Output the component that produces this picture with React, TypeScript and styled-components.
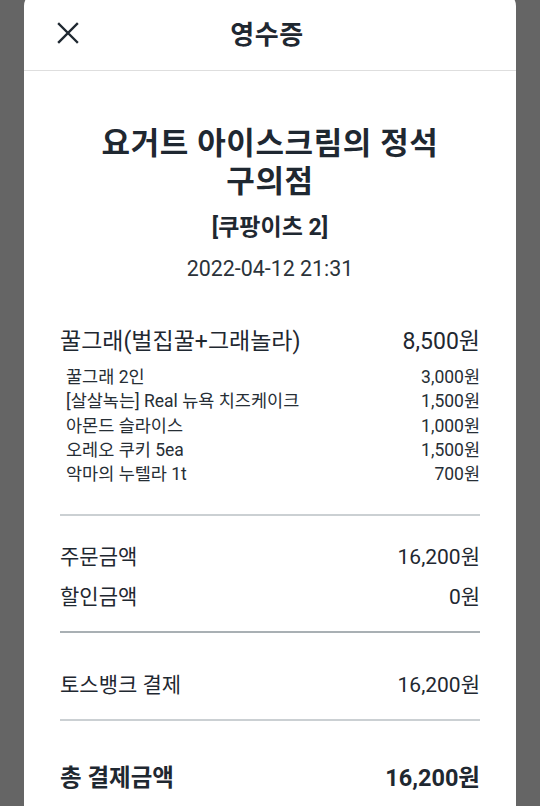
import React from "react";
import styled, { createGlobalStyle } from "styled-components";

const GlobalStyle = createGlobalStyle`
  html, body {
    margin: 0;
    padding: 0;
    background: #656565;
  }
  body {
    font-family: Roboto, "Noto Sans CJK KR", sans-serif;
    color: #1f2831;
  }
`;

type SubItem = { name: string; price: string };

const subItems: SubItem[] = [
  { name: "꿀그래 2인", price: "3,000원" },
  { name: "[살살녹는] Real 뉴욕 치즈케이크", price: "1,500원" },
  { name: "아몬드 슬라이스", price: "1,000원" },
  { name: "오레오 쿠키 5ea", price: "1,500원" },
  { name: "악마의 누텔라 1t", price: "700원" },
];

const CloseIcon = () => (
  <svg width="22" height="22" viewBox="0 0 22 22" fill="none">
    <path
      d="M2 2L20 20M20 2L2 20"
      stroke="#1f2831"
      strokeWidth="2.4"
      strokeLinecap="square"
    />
  </svg>
);

const App = () => {
  return (
    <>
      <GlobalStyle />
      <Sheet>
        <Header>
          <CloseButton aria-label="닫기">
            <CloseIcon />
          </CloseButton>
          <HeaderTitle>영수증</HeaderTitle>
        </Header>

        <Body>
          <StoreName>
            요거트 아이스크림의 정석
            <br />
            구의점
          </StoreName>
          <Channel>[쿠팡이츠 2]</Channel>
          <DateText>2022-04-12 21:31</DateText>

          <MenuBlock>
            <Row $size="main">
              <span>꿀그래(벌집꿀+그래놀라)</span>
              <span>8,500원</span>
            </Row>
            <SubList>
              {subItems.map((item) => (
                <Row key={item.name} $size="sub">
                  <span>{item.name}</span>
                  <span>{item.price}</span>
                </Row>
              ))}
            </SubList>
          </MenuBlock>

          <Divider />

          <Section $top={21} $bottom={14}>
            <Row $size="normal">
              <span>주문금액</span>
              <span>16,200원</span>
            </Row>
            <Row $size="normal">
              <span>할인금액</span>
              <span>0원</span>
            </Row>
          </Section>

          <Divider $dark />

          <Section $top={32} $bottom={14}>
            <Row $size="normal">
              <span>토스뱅크 결제</span>
              <span>16,200원</span>
            </Row>
          </Section>

          <Divider />

          <Section $top={41} $bottom={20}>
            <Row $size="total">
              <span>총 결제금액</span>
              <span>16,200원</span>
            </Row>
          </Section>
        </Body>
      </Sheet>
    </>
  );
};

export default App;

const Sheet = styled.div`
  margin: -8px 24px 0;
  padding-top: 8px;
  background: #fff;
  border-radius: 14px 14px 0 0;
  min-height: 820px;
`;

const Header = styled.header`
  position: relative;
  height: 70px;
  display: flex;
  align-items: center;
  justify-content: center;
  border-bottom: 1px solid #dedede;
`;

const CloseButton = styled.button`
  position: absolute;
  left: 33px;
  top: 22px;
  padding: 0;
  border: none;
  background: transparent;
  display: flex;
  cursor: pointer;
`;

const HeaderTitle = styled.h1`
  margin: 0 0 0 -6px;
  font-size: 26px;
  line-height: 32px;
  font-weight: 700;
  letter-spacing: 0.5px;
`;

const Body = styled.main`
  padding: 54px 36px 0;
`;

const StoreName = styled.h2`
  margin: 0;
  text-align: center;
  font-size: 31px;
  line-height: 38px;
  font-weight: 700;
  letter-spacing: 0.6px;
`;

const Channel = styled.div`
  margin-top: 12px;
  text-align: center;
  font-size: 23px;
  line-height: 30px;
  font-weight: 700;
`;

const DateText = styled.div`
  margin-top: 12px;
  text-align: center;
  font-size: 21.4px;
  line-height: 28px;
  color: #2b333a;
`;

const MenuBlock = styled.div`
  margin-top: 43px;
  padding-bottom: 28px;
`;

const SubList = styled.div`
  margin-top: 7px;
  padding-left: 6px;
`;

const sizes = {
  main: { font: 23, line: 32, weight: 400 },
  sub: { font: 17.5, line: 24.25, weight: 400 },
  normal: { font: 21, line: 40, weight: 400 },
  total: { font: 23.5, line: 32, weight: 700 },
};

const Row = styled.div<{ $size: keyof typeof sizes }>`
  display: flex;
  justify-content: space-between;
  align-items: center;
  font-size: ${({ $size }) => sizes[$size].font}px;
  line-height: ${({ $size }) => sizes[$size].line}px;
  font-weight: ${({ $size }) => sizes[$size].weight};
  color: ${({ $size }) => ($size === "sub" ? "#262e35" : "#1f2831")};
`;

const Divider = styled.hr<{ $dark?: boolean }>`
  margin: 0;
  border: none;
  height: 2px;
  background: ${({ $dark }) => ($dark ? "#a9b0b4" : "#cbd0d3")};
`;

const Section = styled.section<{ $top: number; $bottom: number }>`
  padding: ${({ $top }) => $top}px 0 ${({ $bottom }) => $bottom}px;
`;
